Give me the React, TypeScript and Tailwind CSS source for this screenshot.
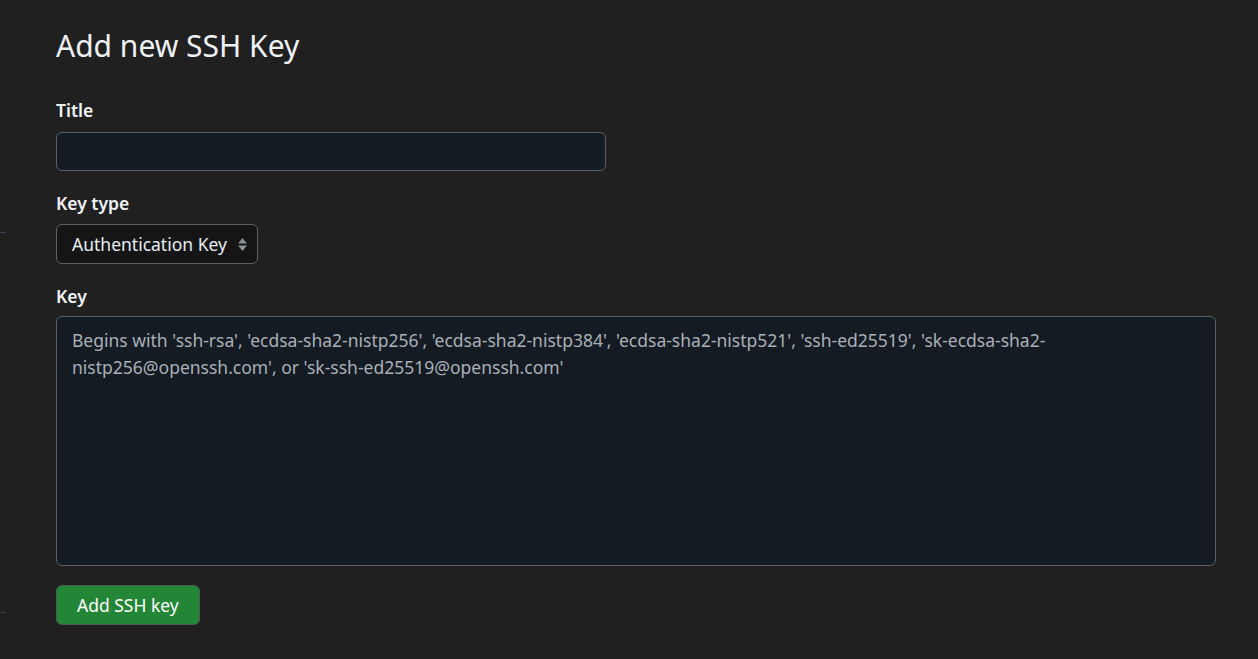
import React from "react";

export default function App() {
  return (
    <div className="min-h-[659px] w-full bg-[#202020] text-[#e6edf3] flex" style={{ fontFamily: '"Noto Sans", sans-serif' }}>
      <div className="w-[6px] shrink-0 flex flex-col">
        <div className="mt-[232px] h-px w-[6px] bg-[#3d4450]" />
        <div className="mt-[379px] h-px w-[6px] bg-[#3d4450]" />
      </div>
      <div className="flex-1 pl-[50px] pr-[42px] pt-[24px]">
        <h1 className="text-[30px] font-normal leading-[44px] text-[#eef1f4]">Add new SSH Key</h1>
        <form className="mt-[30px] flex flex-col">
          <label className="text-[17.5px] font-semibold leading-[24px] text-[#f0f3f6]">Title</label>
          <input
            type="text"
            className="mt-[10px] h-[39px] w-[550px] rounded-[6px] border border-[#5c5f63] bg-[#151b23] px-[15px] text-[17.5px] outline-none"
          />
          <label className="mt-[20px] text-[17.5px] font-semibold leading-[24px] text-[#f0f3f6]">Key type</label>
          <div className="mt-[9px] flex h-[40px] w-[202px] items-center justify-between rounded-[6px] border border-[#5c5f63] bg-[#151515] pl-[15px] pr-[9px]">
            <span className="text-[17.5px] text-[#e6edf3]">Authentication Key</span>
            <svg width="11" height="17" viewBox="0 0 11 17" className="shrink-0">
              <path d="M5.5 2 L10 7.5 L1 7.5 Z" fill="#8b8f94" />
              <path d="M5.5 15 L10 9.5 L1 9.5 Z" fill="#8b8f94" />
            </svg>
          </div>
          <label className="mt-[20px] text-[17.5px] font-semibold leading-[24px] text-[#f0f3f6]">Key</label>
          <div className="mt-[8px] h-[250px] w-full rounded-[6px] border border-[#5c5f63] bg-[#151b23] px-[15px] pt-[10px] text-[17.5px] leading-[27px] text-[#a9b0b8]">
            Begins with 'ssh-rsa', 'ecdsa-sha2-nistp256', 'ecdsa-sha2-nistp384', 'ecdsa-sha2-nistp521', 'ssh-ed25519', 'sk-ecdsa-sha2-
            <br />
            nistp256@openssh.com', or 'sk-ssh-ed25519@openssh.com'
          </div>
          <div className="mt-[19px]">
            <button
              type="button"
              className="h-[40px] rounded-[6px] border border-[#4a5c4e] bg-[#238636] px-[20px] text-[17.5px] font-normal text-white"
            >
              Add SSH key
            </button>
          </div>
        </form>
      </div>
    </div>
  );
}
